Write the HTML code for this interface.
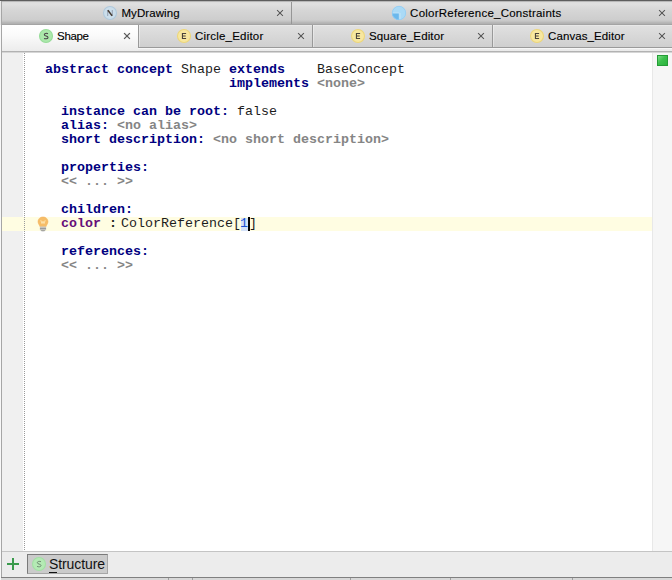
<!DOCTYPE html>
<html><head><meta charset="utf-8">
<style>
html,body{margin:0;padding:0;}
body{width:672px;height:580px;overflow:hidden;background:#e8e8e8;position:relative;font-family:"Liberation Sans",sans-serif;}
.abs{position:absolute;}
#topline{left:0;top:0;width:672px;height:1px;background:#5e5e5e;}
#row1{left:2px;top:1px;width:670px;height:24px;background:linear-gradient(#b8b8b8 0px,#b8b8b8 1px,#dcdcdc 1px,#e0e0e0 3px,#d6d6d6 9px,#cdcdcd 19px,#c6c6c6 20px,#bebebe 21px,#b2b2b2 22px,#b2b2b2 23px,#a4a4a4 23px,#a4a4a4 24px);}
#row2{left:2px;top:25px;width:670px;height:22px;background:linear-gradient(#e8e8e8 0px,#e8e8e8 1px,#e0e0e0 1px,#cfcfcf 22px);}
#row2b{left:138px;top:47px;width:534px;height:1px;background:#9a9a9a;}
#seltab{left:2px;top:25px;width:136px;height:26px;background:linear-gradient(#ffffff,#fafafa 40%,#ececec);}
#strip{left:2px;top:48px;width:670px;height:3px;background:linear-gradient(#f6f6f6 0px,#f6f6f6 1px,#ececec 1px,#eaeaea 3px);}
#strip2{left:2px;top:51px;width:670px;height:2px;background:linear-gradient(#b2b2b2 0px,#b2b2b2 1px,#d6d6d6 1px,#d6d6d6 2px);}
#leftedge{left:0;top:1px;width:1px;height:579px;background:linear-gradient(#ececec 0px,#e8e8e8 24px,#f8f8f8 24px,#f8f8f8 100%);}
#leftline{left:1px;top:1px;width:1px;height:576px;background:#a6a6a6;}
#v1{left:291px;top:2px;width:1px;height:22px;background:#969696;}
.vsep{top:25px;width:2px;height:22px;background:linear-gradient(90deg,#999999 0px,#999999 1px,rgba(255,255,255,0.35) 1px,rgba(255,255,255,0.35) 2px);}
.tab{position:absolute;font-size:11.5px;color:#000;-webkit-text-stroke:0.12px #000;white-space:nowrap;line-height:14px;}
#editor{left:2px;top:53px;width:650px;height:498px;background:#fff;}
#gutter{left:2px;top:53px;width:20.5px;height:498px;background:#f0f0f0;}
#dots{left:24px;top:53px;width:1px;height:498px;background:repeating-linear-gradient(#9a9a9a 0 1px,transparent 1px 2px);}
#rstripe{left:652px;top:53px;width:20px;height:498px;background:#f6f6f6;border-left:1px solid #e8e8e8;box-sizing:border-box;}
#green{left:657px;top:55px;width:11px;height:11px;background:linear-gradient(135deg,#7cdb86 0%,#3cc04c 45%,#2bb33d 100%);border:1px solid #249c36;box-sizing:border-box;}
#hl{left:2px;top:217px;width:650px;height:14px;background:#fffde2;}
#hlg{left:2px;top:217px;width:22px;height:14px;background:#fffde2;}
#sel{left:241.2px;top:217.5px;width:7px;height:13px;background:#d3e1f8;}
#caret{left:248.4px;top:217px;width:1.6px;height:14px;background:#000;}
.ln{position:absolute;transform-origin:0 10px;transform:translateY(-0.3px) scaleY(0.89);font-family:"Liberation Mono",monospace;font-size:13.33px;line-height:14px;white-space:pre;color:#1c1c1c;height:14px;}
.k{font-weight:bold;color:#000080;}
.g{color:#858585;font-weight:bold;}
.p{font-weight:bold;color:#660e7a;}
.n{color:#1a4fd0;}
#botline{left:2px;top:551px;width:670px;height:1px;background:#c4c4c4;}
#bot{left:2px;top:552px;width:670px;height:25px;background:#ececec;}
#botline2{left:1px;top:577px;width:671px;height:1px;background:#808080;}
#bot3{left:0;top:578px;width:672px;height:2px;background:#d8d8d8;}
.bsep{top:578px;width:1px;height:2px;background:#a0a0a0;}
#sbtn{left:27px;top:554px;width:81px;height:20px;background:#cbcbcb;border:1px solid;border-color:#7a7a7a #a6a6a6 #a6a6a6 #7a7a7a;box-sizing:border-box;}
#stext{left:49px;top:556px;font-size:14px;line-height:16px;color:#111;letter-spacing:-0.1px;}
#sul{left:49px;top:572px;width:8px;height:1px;background:#111;}
</style></head><body>
<div class="abs" id="topline"></div>
<div class="abs" id="row1"></div>
<div class="abs" id="row2"></div>
<div class="abs" id="row2b"></div>
<div class="abs" id="strip"></div>
<div class="abs" id="seltab"></div>
<div class="abs" id="strip2"></div>
<div class="abs" id="v1"></div>
<div class="abs vsep" style="left:138px"></div>
<div class="abs vsep" style="left:312px"></div>
<div class="abs vsep" style="left:492px"></div>
<svg class="abs" style="left:102px;top:4.9px" width="16" height="16" viewBox="0 0 16 16"><circle cx="8" cy="8" r="6.5" fill="#cbdeeb" stroke="#b0c9dc" stroke-width="1.1"/><path d="M5.7 5 V11 M10.3 5 V11" stroke="#9aa6b6" stroke-width="1.1" fill="none"/><path d="M5.9 5.3 L10.1 10.7" stroke="#463c34" stroke-width="1.45" fill="none"/></svg>
<div class="tab" style="left:121.4px;top:5.5px;letter-spacing:0.079px">MyDrawing</div>
<svg class="abs" style="left:274.9px;top:7.85px" width="10" height="10" viewBox="0 0 10 10"><path d="M2.1 2.1 L7.9 7.9 M7.9 2.1 L2.1 7.9" stroke="#ececec" stroke-width="2.4" stroke-opacity="0.6" fill="none"/><path d="M2.1 2.1 L7.9 7.9 M7.9 2.1 L2.1 7.9" stroke="#585858" stroke-width="1.25" fill="none"/></svg>
<svg class="abs" style="left:391px;top:4.95px" width="16" height="16" viewBox="0 0 16 16"><defs><clipPath id="cc"><circle cx="8" cy="8" r="7"/></clipPath></defs><circle cx="8" cy="8" r="7" fill="#aadaf6"/><g clip-path="url(#cc)"><rect x="0" y="8" width="8.3" height="8" fill="#6bb8ec"/><path d="M0 8 H8.3 V16" stroke="#c4e4f8" stroke-width="0.9" fill="none"/><path d="M9.3 8 V16" stroke="#bfe2f8" stroke-width="0.8" fill="none"/></g><circle cx="8" cy="8" r="6.7" fill="none" stroke="#8ccaf3" stroke-width="0.7"/></svg>
<div class="tab" style="left:410.1px;top:5.5px;letter-spacing:0.242px">ColorReference_Constraints</div>
<svg class="abs" style="left:656.75px;top:7.85px" width="10" height="10" viewBox="0 0 10 10"><path d="M2.1 2.1 L7.9 7.9 M7.9 2.1 L2.1 7.9" stroke="#ececec" stroke-width="2.4" stroke-opacity="0.6" fill="none"/><path d="M2.1 2.1 L7.9 7.9 M7.9 2.1 L2.1 7.9" stroke="#585858" stroke-width="1.25" fill="none"/></svg>
<svg class="abs" style="left:38.05px;top:27.95px" width="16" height="16" viewBox="0 0 16 16"><circle cx="8" cy="8" r="6.5" fill="#abe8ab" stroke="#97dc99" stroke-width="1.1"/><path d="M10 5.7 C8.6 5.1 6.4 5.2 6.3 6.7 C6.3 8.3 10 7.9 10 9.5 C10 11.1 7.4 11 6.1 10.4" stroke="#4a4048" stroke-width="1.05" fill="none"/></svg>
<div class="tab" style="left:57.1px;top:28.5px;letter-spacing:-0.354px">Shape</div>
<svg class="abs" style="left:121.7px;top:30.85px" width="10" height="10" viewBox="0 0 10 10"><path d="M2.1 2.1 L7.9 7.9 M7.9 2.1 L2.1 7.9" stroke="#ececec" stroke-width="2.4" stroke-opacity="0.6" fill="none"/><path d="M2.1 2.1 L7.9 7.9 M7.9 2.1 L2.1 7.9" stroke="#585858" stroke-width="1.25" fill="none"/></svg>
<svg class="abs" style="left:176.05px;top:28px" width="16" height="16" viewBox="0 0 16 16"><circle cx="8" cy="8" r="6.5" fill="#f7e79f" stroke="#edd67a" stroke-width="1.1"/><path d="M6.45 5 V11 M6.45 5.45 H10.1 M6.45 8 H9.7 M6.45 10.55 H10.1" stroke="#4a443c" stroke-width="1.1" fill="none"/></svg>
<div class="tab" style="left:195px;top:28.5px;letter-spacing:0.202px">Circle_Editor</div>
<svg class="abs" style="left:295.7px;top:30.85px" width="10" height="10" viewBox="0 0 10 10"><path d="M2.1 2.1 L7.9 7.9 M7.9 2.1 L2.1 7.9" stroke="#ececec" stroke-width="2.4" stroke-opacity="0.6" fill="none"/><path d="M2.1 2.1 L7.9 7.9 M7.9 2.1 L2.1 7.9" stroke="#585858" stroke-width="1.25" fill="none"/></svg>
<svg class="abs" style="left:350.2px;top:28px" width="16" height="16" viewBox="0 0 16 16"><circle cx="8" cy="8" r="6.5" fill="#f7e79f" stroke="#edd67a" stroke-width="1.1"/><path d="M6.45 5 V11 M6.45 5.45 H10.1 M6.45 8 H9.7 M6.45 10.55 H10.1" stroke="#4a443c" stroke-width="1.1" fill="none"/></svg>
<div class="tab" style="left:369px;top:28.5px;letter-spacing:0.127px">Square_Editor</div>
<svg class="abs" style="left:475.7px;top:30.85px" width="10" height="10" viewBox="0 0 10 10"><path d="M2.1 2.1 L7.9 7.9 M7.9 2.1 L2.1 7.9" stroke="#ececec" stroke-width="2.4" stroke-opacity="0.6" fill="none"/><path d="M2.1 2.1 L7.9 7.9 M7.9 2.1 L2.1 7.9" stroke="#585858" stroke-width="1.25" fill="none"/></svg>
<svg class="abs" style="left:529px;top:28px" width="16" height="16" viewBox="0 0 16 16"><circle cx="8" cy="8" r="6.5" fill="#f7e79f" stroke="#edd67a" stroke-width="1.1"/><path d="M6.45 5 V11 M6.45 5.45 H10.1 M6.45 8 H9.7 M6.45 10.55 H10.1" stroke="#4a443c" stroke-width="1.1" fill="none"/></svg>
<div class="tab" style="left:548px;top:28.5px;letter-spacing:0.093px">Canvas_Editor</div>
<svg class="abs" style="left:656.75px;top:30.85px" width="10" height="10" viewBox="0 0 10 10"><path d="M2.1 2.1 L7.9 7.9 M7.9 2.1 L2.1 7.9" stroke="#ececec" stroke-width="2.4" stroke-opacity="0.6" fill="none"/><path d="M2.1 2.1 L7.9 7.9 M7.9 2.1 L2.1 7.9" stroke="#585858" stroke-width="1.25" fill="none"/></svg>
<div class="abs" id="editor"></div>
<div class="abs" id="hl"></div>
<div class="abs" id="gutter"></div>
<div class="abs" id="hlg"></div>
<div class="abs" id="dots"></div>
<div class="abs" id="rstripe"></div>
<div class="abs" id="green"></div>
<div class="ln" style="left:45.1px;top:63px"><span class="k">abstract concept</span> Shape <span class="k">extends</span>    BaseConcept</div>
<div class="ln" style="left:229.1px;top:77px"><span class="k">implements</span> <span class="g">&lt;none&gt;</span></div>
<div class="ln" style="left:61.1px;top:105px"><span class="k">instance can be root:</span> false</div>
<div class="ln" style="left:61.1px;top:119px"><span class="k">alias:</span> <span class="g">&lt;no alias&gt;</span></div>
<div class="ln" style="left:61.1px;top:133px"><span class="k">short description:</span> <span class="g">&lt;no short description&gt;</span></div>
<div class="ln" style="left:61.1px;top:161px"><span class="k">properties:</span></div>
<div class="ln" style="left:61.1px;top:175px"><span class="g">&lt;&lt; ... &gt;&gt;</span></div>
<div class="ln" style="left:61.1px;top:203px"><span class="k">children:</span></div>
<div class="ln" style="left:61.1px;top:217px"><span class="p">color</span></div>
<div class="ln" style="left:109.1px;top:217px"><b>:</b></div>
<div class="ln" style="left:121px;top:217px">ColorReference[</div>
<div class="abs" id="sel"></div>
<div class="ln" style="left:240.1px;top:217px"><span class="n">1</span></div>
<div class="abs" id="caret"></div>
<div class="ln" style="left:249.1px;top:217px">]</div>
<div class="ln" style="left:61.1px;top:245px"><span class="k">references:</span></div>
<div class="ln" style="left:61.1px;top:259px"><span class="g">&lt;&lt; ... &gt;&gt;</span></div>
<svg class="abs" style="left:36px;top:216px" width="14" height="16" viewBox="0 0 14 16"><path d="M7 0.9 C9.9 0.9 12 3 12 5.7 C12 7.6 10.6 8.7 10.1 10.6 H3.9 C3.4 8.7 2 7.6 2 5.7 C2 3 4.1 0.9 7 0.9 Z" fill="#f6bd68" stroke="#f2b05c" stroke-width="0.5"/><path d="M4.8 4.2 L6 7.6 L7 5.2 L8 7.6 L9.2 4.2" stroke="#fde6b4" stroke-width="0.9" fill="none"/><rect x="3.9" y="10.6" width="6.2" height="1.3" fill="#c4c4c4"/><rect x="3.9" y="11.9" width="6.2" height="1.2" fill="#9c9c9c"/><rect x="3.9" y="13.1" width="6.2" height="1.1" fill="#bdbdbd"/><path d="M4.6 14.2 H9.4 L8.4 15.2 H5.6 Z" fill="#8c8c8c"/></svg>

<div class="abs" id="botline"></div>
<div class="abs" id="bot"></div>
<div class="abs" id="botline2"></div>
<div class="abs" id="bot3"></div>
<div class="abs bsep" style="left:168px"></div>
<div class="abs bsep" style="left:192px"></div>
<div class="abs bsep" style="left:350px"></div>
<div class="abs bsep" style="left:450px"></div>
<div class="abs bsep" style="left:572px"></div>
<svg class="abs" style="left:6px;top:557px" width="14" height="14" viewBox="0 0 14 14"><path d="M7 1 V13 M1 7 H13" stroke="#3a9a4c" stroke-width="2" fill="none"/></svg>
<div class="abs" id="sbtn"></div>
<svg class="abs" style="left:30.7px;top:556px" width="16" height="16" viewBox="0 0 16 16"><circle cx="8" cy="8" r="6.5" fill="#b4eab4" stroke="#a2e0a4" stroke-width="1.1"/><path d="M10 5.7 C8.6 5.1 6.4 5.2 6.3 6.7 C6.3 8.3 10 7.9 10 9.5 C10 11.1 7.4 11 6.1 10.4" stroke="#6f8a72" stroke-width="1.0" fill="none"/></svg>
<div class="abs" id="stext">Structure</div>
<div class="abs" id="sul"></div>
<div class="abs" id="leftedge"></div>
<div class="abs" id="leftline"></div>
</body></html>
